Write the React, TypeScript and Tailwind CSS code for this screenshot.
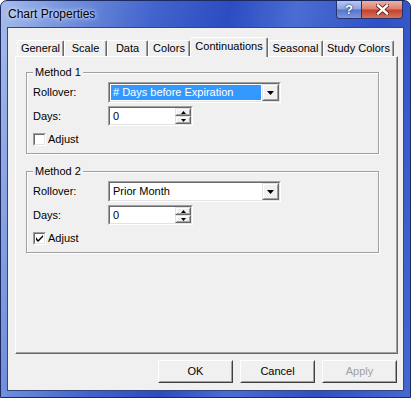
import React from 'react';

const Sunken = ({ className = '', children }: { className?: string; children?: React.ReactNode }) => (
    <div className={`border border-t-[#a0a0a0] border-l-[#a0a0a0] border-r-white border-b-white ${className}`}>
        <div className="h-full border border-t-[#696969] border-l-[#696969] border-r-[#e3e3e3] border-b-[#e3e3e3] bg-white flex items-stretch">
            {children}
        </div>
    </div>
);

const Raised = ({ className = '', children }: { className?: string; children?: React.ReactNode }) => (
    <div className={`border border-t-[#e3e3e3] border-l-[#e3e3e3] border-r-[#696969] border-b-[#696969] bg-[#f0f0f0] ${className}`}>
        <div className="h-full border border-t-white border-l-white border-r-[#a0a0a0] border-b-[#a0a0a0] flex items-center justify-center">
            {children}
        </div>
    </div>
);

const Arrow = ({ up = false, w = 7, h = 4 }: { up?: boolean; w?: number; h?: number }) => (
    <svg width={w} height={h} viewBox={`0 0 ${w} ${h}`}>
        <path d={up ? `M0 ${h}H${w}L${w / 2} 0Z` : `M0 0H${w}L${w / 2} ${h}Z`} fill="#000" />
    </svg>
);

const Combo = ({ value, selected = false }: { value: string; selected?: boolean }) => (
    <Sunken className="w-[173px] h-[21px]">
        <div className="flex-1 flex items-center p-[1px]">
            <div className={`h-full w-full flex items-center pl-[2px] ${selected ? 'bg-[#3399ff] text-white' : ''}`}>
                {value}
            </div>
        </div>
        <Raised className="w-[17px]">
            <Arrow />
        </Raised>
    </Sunken>
);

const Spin = ({ value }: { value: string }) => (
    <Sunken className="w-[85px] h-[20px]">
        <div className="flex-1 flex items-center pl-[3px]">{value}</div>
        <div className="w-[16px] flex flex-col">
            <Raised className="flex-1">
                <Arrow up w={5} h={3} />
            </Raised>
            <Raised className="flex-1">
                <Arrow w={5} h={3} />
            </Raised>
        </div>
    </Sunken>
);

const Checkbox = ({ checked }: { checked: boolean }) => (
    <Sunken className="w-[13px] h-[13px]">
        <div className="flex-1 flex items-center justify-center">
            {checked && (
                <svg width="7" height="7" viewBox="0 0 7 7">
                    <path d="M0 2v3l2 2 5-5V-0L2 5z" fill="#000" />
                </svg>
            )}
        </div>
    </Sunken>
);

const MethodGroup = ({ title, rollover, selected, adjust, className = '' }: {
    title: string; rollover: string; selected: boolean; adjust: boolean; className?: string;
}) => (
    <fieldset className={`w-[353px] ml-[10px] px-[6px] pb-[6px] border border-[#a0a0a0] shadow-[inset_1px_1px_0_#fff,1px_1px_0_#fff] ${className}`}>
        <legend className="px-[2px] leading-[13px] bg-[#f0f0f0]">{title}</legend>
        <div className="flex items-center mt-[3px]">
            <span className="w-[75px]">Rollover:</span>
            <Combo value={rollover} selected={selected} />
        </div>
        <div className="flex items-center mt-[3px]">
            <span className="w-[75px]">Days:</span>
            <Spin value="0" />
        </div>
        <div className="flex items-center h-[15px] mt-[6px]">
            <Checkbox checked={adjust} />
            <span className="ml-[2px]">Adjust</span>
        </div>
    </fieldset>
);

const tabs = [
    { label: 'General', w: 'w-[47px]' },
    { label: 'Scale', w: 'w-[43px]' },
    { label: 'Data', w: 'w-[41px]' },
    { label: 'Colors', w: 'w-[42px]' },
    { label: 'Continuations', w: 'w-[78px]', active: true },
    { label: 'Seasonal', w: 'w-[55px]' },
    { label: 'Study Colors', w: 'w-[71px]' },
];

const DlgButton = ({ label, disabled = false }: { label: string; disabled?: boolean }) => (
    <div className="w-[75px] h-[23px] border border-t-white border-l-white border-r-[#404040] border-b-[#404040] bg-[#f0f0f0]">
        <div className={`h-full border border-t-[#f0f0f0] border-l-[#f0f0f0] border-r-[#a0a0a0] border-b-[#a0a0a0] flex items-center justify-center ${disabled ? 'text-[#a0a0a0]' : ''}`}>
            {label}
        </div>
    </div>
);

export default function App() {
    return (
        <div className="w-[411px] h-[398px] flex flex-col border border-[#1c2a60] rounded-t-[7px] bg-[linear-gradient(100deg,#a7bceb_0%,#7391dc_14%,#4364cc_32%,#2c4cc2_48%,#4b6dd2_62%,#2f50c4_80%,#4668d0_100%)] font-['Liberation_Sans',Arial,sans-serif] text-[11px] text-black select-none">
            {/* title bar */}
            <div className="h-[26px] flex items-start pr-[7px]">
                <div className="flex-1 h-full flex items-center pl-[7px] text-[12px] [text-shadow:0_0_6px_#dfe8fa,0_0_3px_#dfe8fa]">
                    Chart Properties
                </div>
                <div className="flex h-[18px] border border-t-0 border-[#23346e] rounded-b-[4px] overflow-hidden">
                    <div className="w-[25px] flex items-center justify-center bg-[linear-gradient(180deg,#b8c8f0_0%,#8aa2e2_48%,#5674cc_52%,#7d98de_100%)] border-r border-[#23346e] text-white font-bold text-[13px] [text-shadow:0_0_2px_#1c2a60,0_0_1px_#1c2a60]">
                        ?
                    </div>
                    <div className="w-[40px] flex items-center justify-center bg-[linear-gradient(180deg,#eeb0a4_0%,#dc7e6c_48%,#c4402c_52%,#d8705c_100%)]">
                        <svg width="13" height="11" viewBox="0 0 13 11">
                            <path d="M2 1.5L11 9.5M11 1.5L2 9.5" stroke="#5a1a10" strokeWidth="4" strokeLinecap="square" />
                            <path d="M2 1.5L11 9.5M11 1.5L2 9.5" stroke="#fff" strokeWidth="2.4" strokeLinecap="square" />
                        </svg>
                    </div>
                </div>
            </div>

            {/* client area */}
            <div className="flex-1 mx-[6px] mb-[6px] border border-[#34467a] bg-[#f0f0f0] flex flex-col pt-[9px] pl-[7px] pr-[6px]">
                <div className="h-[19px] flex items-end pl-[2px]">
                    {tabs.map(t => (
                        <div
                            key={t.label}
                            className={`${t.w} flex items-center justify-center border-t border-l border-r border-t-white border-l-white border-r-[#696969] rounded-t-[2px] shadow-[inset_-1px_0_0_#a0a0a0] bg-[#f0f0f0] ${t.active ? 'h-[20px] -mb-[1px] relative pb-[3px]' : 'h-[16px]'}`}
                        >
                            {t.label}
                        </div>
                    ))}
                </div>

                <div className="w-[383px] h-[298px] border border-t-white border-l-white border-r-[#696969] border-b-[#696969] shadow-[inset_-1px_-1px_0_#a0a0a0] bg-[#f0f0f0] pt-[9px]">
                    <MethodGroup title="Method 1" rollover="# Days before Expiration" selected adjust={false} />
                    <MethodGroup title="Method 2" rollover="Prior Month" selected={false} adjust className="mt-[11px]" />
                </div>

                <div className="flex justify-end gap-[7px] mt-[6px]">
                    <DlgButton label="OK" />
                    <DlgButton label="Cancel" />
                    <DlgButton label="Apply" disabled />
                </div>
            </div>
        </div>
    );
}
